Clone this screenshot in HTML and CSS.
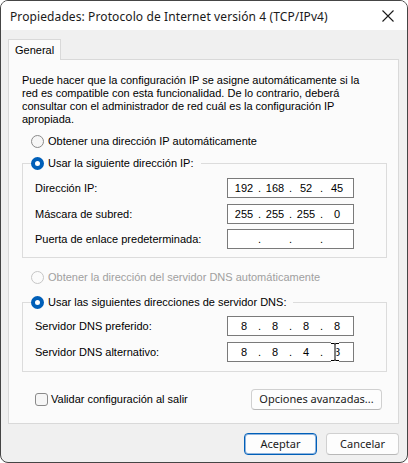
FILE: index.html
```html
<!DOCTYPE html>
<html lang="es">
<head>
<meta charset="utf-8">
<title>Propiedades</title>
<link rel="stylesheet" href="styles.css">
</head>
<body>
<div class="window">
  <div class="titlebar">
    <span class="title">Propiedades: Protocolo de Internet versión 4 (TCP/IPv4)</span>
    <svg class="close" width="12" height="12" viewBox="0 0 12 12"><path d="M0.5 0.5 L11.5 11.5 M11.5 0.5 L0.5 11.5" stroke="#1a1a1a" stroke-width="1.1" fill="none"/></svg>
  </div>
  <div class="client">
    <div class="tabs"><div class="tab">General</div></div>
    <div class="panel">
      <p class="desc">Puede hacer que la configuración IP se asigne automáticamente si la<br>red es compatible con esta funcionalidad. De lo contrario, deberá<br>consultar con el administrador de red cuál es la configuración IP<br>apropiada.</p>
      <div class="radio-row first"><span class="radio"></span>Obtener una dirección IP automáticamente</div>
      <fieldset class="group g1">
        <legend class="radio-row"><span class="radio checked"></span>Usar la siguiente dirección IP:</legend>
        <div class="rows">
          <div class="field-row"><span class="label">Dirección IP:</span><div class="ip"><span>192</span><i>.</i><span>168</span><i>.</i><span>52</span><i>.</i><span>45</span></div></div>
          <div class="field-row"><span class="label">Máscara de subred:</span><div class="ip"><span>255</span><i>.</i><span>255</span><i>.</i><span>255</span><i>.</i><span>0</span></div></div>
          <div class="field-row"><span class="label">Puerta de enlace predeterminada:</span><div class="ip"><span></span><i>.</i><span></span><i>.</i><span></span><i>.</i><span></span></div></div>
        </div>
      </fieldset>
      <div class="radio-row disabled dnsauto"><span class="radio"></span>Obtener la dirección del servidor DNS automáticamente</div>
      <fieldset class="group g2">
        <legend class="radio-row"><span class="radio checked"></span>Usar las siguientes direcciones de servidor DNS:</legend>
        <div class="rows">
          <div class="field-row"><span class="label">Servidor DNS preferido:</span><div class="ip"><span>8</span><i>.</i><span>8</span><i>.</i><span>8</span><i>.</i><span>8</span></div></div>
          <div class="field-row"><span class="label">Servidor DNS alternativo:</span><div class="ip"><span>8</span><i>.</i><span>8</span><i>.</i><span>4</span><i>.</i><span>8</span>
            <svg class="ibeam" width="10" height="20" viewBox="0 0 10 20"><path d="M1 1.5 H4 Q5 1.5 5 2.5 Q5 1.5 6 1.5 H9 M5 2.5 V17.5 M1 18.5 H4 Q5 18.5 5 17.5 Q5 18.5 6 18.5 H9" stroke="#fff" stroke-width="3" fill="none"/><path d="M1 1.5 H4 Q5 1.5 5 2.5 Q5 1.5 6 1.5 H9 M5 2.5 V17.5 M1 18.5 H4 Q5 18.5 5 17.5 Q5 18.5 6 18.5 H9" stroke="#000" stroke-width="1" fill="none"/></svg>
          </div></div>
        </div>
      </fieldset>
      <div class="bottom-row">
        <div class="check"><span class="box"></span>Validar configuración al salir</div>
        <button class="btn adv">Opciones avanzadas...</button>
      </div>
    </div>
    <div class="actions">
      <button class="btn primary">Aceptar</button>
      <button class="btn">Cancelar</button>
    </div>
  </div>
</div>
</body>
</html>
```
FILE: styles.css
```css
html, body {
  margin: 0;
  padding: 0;
  background: #ffffff;
}
body {
  width: 408px;
  height: 463px;
  overflow: hidden;
  font-family: "Liberation Sans", Arial, sans-serif;
  font-size: 11px;
  color: #000;
}
.window {
  box-sizing: border-box;
  width: 408px;
  height: 463px;
  border: 1px solid #454545;
  border-radius: 8px;
  overflow: hidden;
  display: flex;
  flex-direction: column;
  background: #f0f0f0;
}
.titlebar {
  height: 29px;
  flex: none;
  background: #ffffff;
  display: flex;
  align-items: center;
  padding-left: 9px;
  padding-right: 13px;
}
.title {
  font-family: "Noto Sans", sans-serif;
  font-size: 12px;
  color: #1a1a1a;
  flex: 1;
  padding-top: 1px;
  letter-spacing: 0.1px;
}
.close {
  flex: none;
  display: block;
}
.client {
  flex: 1;
  padding: 9px 8px 0 7px;
  display: flex;
  flex-direction: column;
}
.tabs {
  display: flex;
  height: 20px;
  position: relative;
  z-index: 1;
}
.tab {
  box-sizing: border-box;
  width: 53px;
  height: 21px;
  border: 1px solid #d9d9d9;
  border-bottom: none;
  background: #fbfbfb;
  padding: 4px 0 0 6px;
  line-height: 13px;
}
.panel {
  box-sizing: border-box;
  height: 365px;
  border: 1px solid #d9d9d9;
  background: #fbfbfb;
  padding: 14px 11px 0 13px;
}
.desc {
  margin: 0;
  line-height: 13px;
}
.radio-row {
  display: flex;
  align-items: center;
  height: 14px;
  line-height: 14px;
  white-space: nowrap;
}
.radio-row.first {
  margin: 8px 0 0 9px;
}
.radio {
  box-sizing: border-box;
  width: 13px;
  height: 13px;
  border-radius: 50%;
  border: 1px solid #8a8a8a;
  background: #f6f6f6;
  margin-right: 4px;
  flex: none;
}
.radio.checked {
  border: 4px solid #005fb8;
  background: #ffffff;
}
.disabled {
  color: #a0a0a0;
}
.disabled .radio {
  border-color: #c6c6c6;
  background: #fbfbfb;
}
.group {
  margin: 8px 0 0 0;
  padding: 0 32px 8px 12px;
  border: 1px solid #dcdcdc;
  min-width: 0;
}
.group legend {
  padding: 0 7px 0 0;
  margin-left: -4px;
}
.rows {
  display: flex;
  flex-direction: column;
  gap: 5.5px;
  padding-top: 8px;
}
.g2 {
  margin-top: 11px;
  padding-bottom: 9px;
}
.g2 .rows {
  padding-top: 7px;
}
.dnsauto {
  margin: 12px 0 0 9px;
}
.field-row {
  display: flex;
  align-items: center;
  height: 20px;
}
.label {
  flex: 1;
}
.ip {
  position: relative;
  box-sizing: border-box;
  width: 127px;
  height: 20px;
  border: 1px solid #7a7a7a;
  background: #ffffff;
  display: flex;
  align-items: center;
  padding-left: 4px;
}
.ip span {
  width: 24px;
  text-align: center;
}
.ip i {
  font-style: normal;
  width: 7px;
  text-align: center;
}
.ibeam {
  position: absolute;
  left: 102px;
  top: -1px;
}
.bottom-row {
  display: flex;
  align-items: center;
  justify-content: space-between;
  margin-top: 17px;
  padding: 0 5px 0 13px;
}
.check {
  display: flex;
  align-items: center;
}
.box {
  box-sizing: border-box;
  width: 13px;
  height: 13px;
  border: 1px solid #8a8a8a;
  border-radius: 3px;
  background: #f6f6f6;
  margin-right: 3px;
}
.btn {
  font-family: "Noto Sans", sans-serif;
  font-size: 11px;
  color: #1a1a1a;
  box-sizing: border-box;
  height: 22px;
  border: 1px solid #d0d0d0;
  border-bottom-color: #b8b8b8;
  border-radius: 4px;
  background: #fdfdfd;
  padding: 0;
  line-height: 18px;
}
.adv {
  width: 131px;
  height: 21px;
}
.actions {
  display: flex;
  justify-content: flex-end;
  gap: 9px;
  margin-top: 9px;
}
.actions .btn {
  width: 73px;
}
.btn.primary {
  border: 1px solid #005fb8;
  box-shadow: inset 0 0 0 1px #8fb4de;
}
```
